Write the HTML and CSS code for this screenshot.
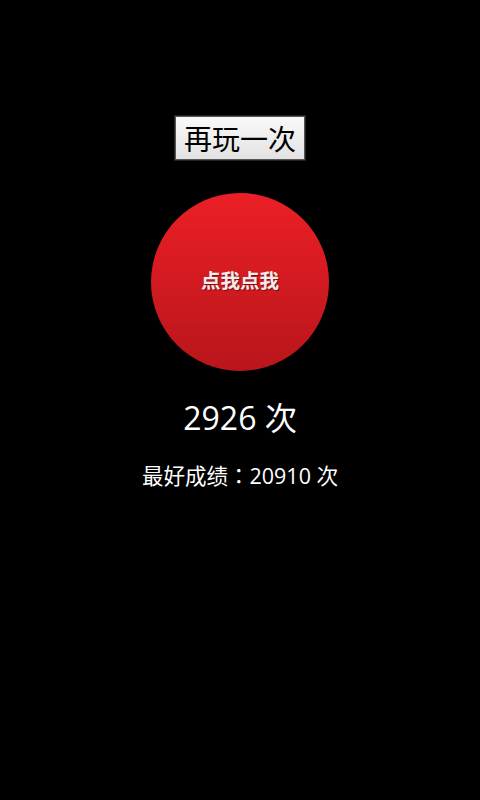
FILE: index.html
```html
<!DOCTYPE html>
<html>
<head>
<meta charset="utf-8">
<link rel="stylesheet" href="styles.css">
</head>
<body>
<div class="screen">
  <button class="again">再玩一次</button>
  <div class="tap"><span>点我点我</span></div>
  <div class="count">2926 次</div>
  <div class="best">最好成绩<span class="colon">：</span>20910 次</div>
</div>
</body>
</html>
```
FILE: styles.css
```css
html, body {
  margin: 0;
  padding: 0;
  background: #000;
}
.screen {
  width: 480px;
  height: 800px;
  display: flex;
  flex-direction: column;
  align-items: center;
  font-family: "Open Sans", "Noto Sans CJK JP", sans-serif;
  color: #fff;
}
.again {
  margin-top: 116px;
  width: 130px;
  height: 44px;
  padding: 0;
  border: 1px solid #555;
  outline: 1px solid #222;
  background: linear-gradient(#fafafa, #e2e2e2);
  color: #000;
  font-family: "Noto Sans CJK SC", sans-serif;
  font-size: 28px;
  line-height: 42px;
}
.tap {
  margin-top: 33px;
  width: 178px;
  height: 178px;
  border-radius: 50%;
  background: linear-gradient(#ec1f26, #b8161b);
  display: flex;
  align-items: center;
  justify-content: center;
}
.tap span {
  font-family: "Noto Sans CJK SC", sans-serif;
  font-weight: 700;
  font-size: 19.5px;
  line-height: 24px;
  margin-top: -4px;
  color: #f4ecec;
  text-shadow: 1px 1px 1px rgba(0,0,0,0.45);
}
.count {
  margin-top: 25px;
  font-size: 32px;
  line-height: 44px;
}
.best {
  margin-top: 20px;
  font-size: 21.5px;
  line-height: 30px;
}
.colon {
  font-family: "Noto Sans CJK JP", sans-serif;
}
```
